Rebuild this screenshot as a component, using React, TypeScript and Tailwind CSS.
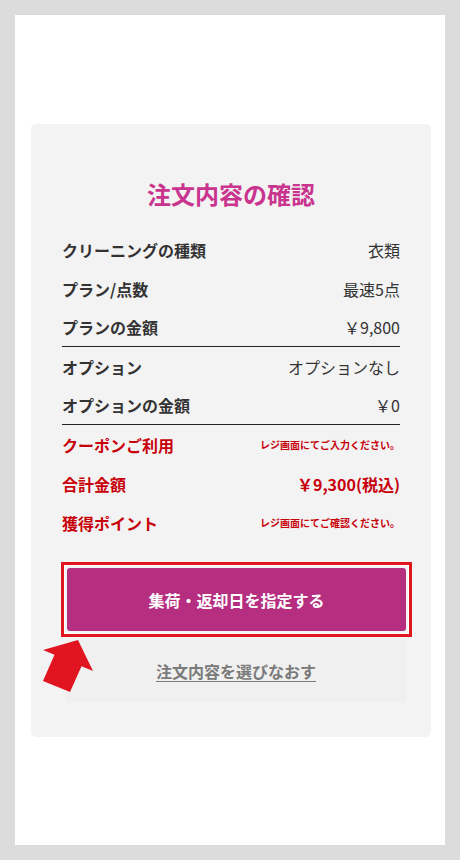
import React from "react";

const font = { fontFamily: '"Noto Sans CJK JP", "Noto Sans", sans-serif' };

type Row = {
  label: string;
  value: string;
  red?: boolean;
  small?: boolean;
  boldValue?: boolean;
  border?: boolean;
};

const rows: Row[] = [
  { label: "クリーニングの種類", value: "衣類" },
  { label: "プラン/点数", value: "最速5点" },
  { label: "プランの金額", value: "￥9,800", border: true },
  { label: "オプション", value: "オプションなし" },
  { label: "オプションの金額", value: "￥0", border: true },
  { label: "クーポンご利用", value: "レジ画面にてご入力ください。", red: true, small: true },
  { label: "合計金額", value: "￥9,300(税込)", red: true, boldValue: true },
  { label: "獲得ポイント", value: "レジ画面にてご確認ください。", red: true, small: true },
];

export default function App() {
  return (
    <div className="min-h-[860px] bg-[#dcdcdc] p-[15px]" style={font}>
      <div className="h-[830px] bg-white pt-[109px]">
        <div className="relative ml-[16px] w-[400px] rounded-[5px] bg-[#f3f3f3] pt-[52px] pb-[35px]">
          <h1 className="h-[36px] text-center text-[24px] font-bold leading-[36px] text-[#c9348f]">
            注文内容の確認
          </h1>
          <div className="mt-[18px] px-[31px]">
            {rows.map((r) => (
              <div
                key={r.label}
                className={
                  "flex h-[39px] items-center justify-between " +
                  (r.border ? "border-b border-[#222222]" : "")
                }
              >
                <span
                  className={
                    "text-[16px] font-bold leading-[24px] " +
                    (r.red ? "text-[#c8000a]" : "text-[#333333]")
                  }
                >
                  {r.label}
                </span>
                <span
                  className={
                    r.small
                      ? "text-[10px] font-bold leading-[16px] text-[#c8000a]"
                      : r.boldValue
                      ? "text-[16px] font-bold leading-[24px] text-[#c8000a]"
                      : "text-[16px] leading-[24px] text-[#333333]"
                  }
                >
                  {r.value}
                </span>
              </div>
            ))}
          </div>
          <div className="mt-[20px] ml-[30px] h-[75px] w-[351px] border-[3px] border-[#e0151f]">
            <div className="h-full w-full border border-white p-[2px]">
              <button className="flex h-full w-full items-center justify-center rounded-[3px] bg-[#b52e7f] text-[16px] font-bold text-white">
                集荷・返却日を指定する
              </button>
            </div>
          </div>
          <div className="mt-[3px] ml-[35px] flex h-[62px] w-[340px] items-center justify-center bg-[#f0f0f0]">
            <span className="text-[16px] font-bold text-[#7a7a7a] underline underline-offset-[3px]">
              注文内容を選びなおす
            </span>
          </div>
          <svg
            className="absolute left-[12px] top-[515px]"
            width="52"
            height="55"
            viewBox="0 0 52 55"
          >
            <polygon
              points="35,1 50,32 38.5,27.2 27,53 0,42 11.5,15.8 0,11"
              fill="#e0151f"
            />
          </svg>
        </div>
      </div>
    </div>
  );
}
